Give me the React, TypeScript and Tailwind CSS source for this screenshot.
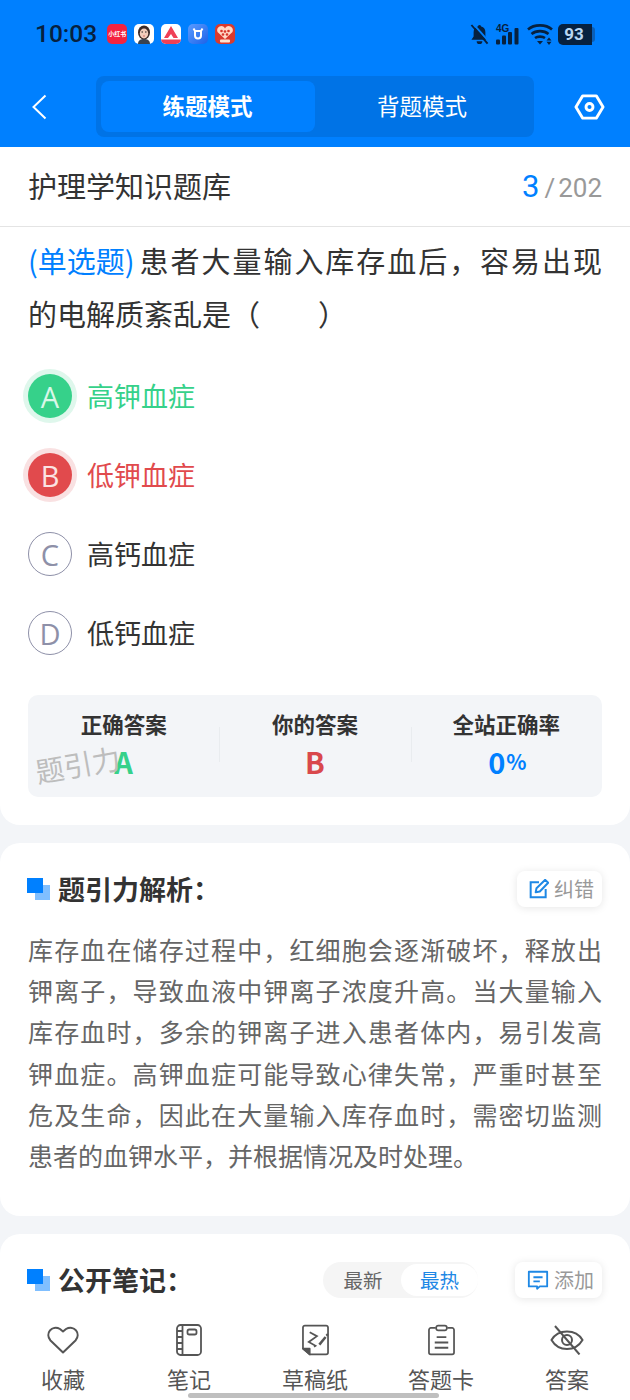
import React from "react";

const CJK = { fontFamily: '"Noto Sans CJK SC", "Noto Sans", sans-serif' };

function Square() {
  return (
    <span className="relative mr-[8px] ml-[-1px] block h-[22px] w-[23px] shrink-0">
      <span className="absolute left-[8px] top-[7px] h-[15px] w-[15px] bg-[#80bfff]" />
      <span className="absolute left-0 top-0 h-[15px] w-[16px] bg-[#0080ff]" />
    </span>
  );
}

function AppIcons() {
  return (
    <div className="flex items-center gap-[7px]">
      <div className="flex h-[20px] w-[20px] items-center justify-center overflow-hidden rounded-[5px] bg-[#f4233f] text-[6px] font-bold leading-none text-white">小红书</div>
      <div className="h-[20px] w-[20px] rounded-[5px] bg-white">
        <svg viewBox="0 0 20 20" className="h-[20px] w-[20px]">
          <ellipse cx="10" cy="8.500" rx="6" ry="7" fill="#3b2a28" />
          <ellipse cx="10" cy="9.500" rx="4.200" ry="5" fill="#f3cdbb" />
          <path d="M4 20c0-4 3-5 6-5s6 1 6 5z" fill="#39424e" />
          <path d="M7.500 8h1.500M11 8h1.500" stroke="#222" strokeWidth="1" />
          <path d="M9 12h2" stroke="#c55" strokeWidth="0.800" />
        </svg>
      </div>
      <div className="h-[20px] w-[20px] overflow-hidden rounded-[5px] bg-white">
        <svg viewBox="0 0 20 20" className="h-[20px] w-[20px]">
          <path d="M10 2 L17 14 H12.500 L10 10 L7 14 H3 Z" fill="#ef4056" />
          <rect x="0" y="15.500" width="20" height="4.500" fill="#ef4056" />
        </svg>
      </div>
      <div className="h-[20px] w-[20px] rounded-[5px] bg-gradient-to-br from-[#5a9bff] to-[#1c62e8]">
        <svg viewBox="0 0 20 20" className="h-[20px] w-[20px]" fill="none" stroke="#fff" strokeWidth="2">
          <path d="M5.500 4.500 7 7h6l1.500-2.500M7 7v4.500a3 3 0 0 0 6 0V7" />
        </svg>
      </div>
      <div className="h-[20px] w-[20px] overflow-hidden rounded-[5px] bg-[#d93a2e]">
        <svg viewBox="0 0 20 20" className="h-[20px] w-[20px]">
          <path d="M10 15 L2.500 8 A4 4 0 0 1 10 4.500 A4 4 0 0 1 17.500 8 Z" fill="#ffd9c7" />
          <circle cx="6.500" cy="7" r="1.300" fill="#d8352a" />
          <circle cx="13.500" cy="7" r="1.300" fill="#d8352a" />
          <circle cx="10" cy="7.500" r="1.300" fill="#d8352a" />
          <circle cx="8" cy="10.500" r="1.300" fill="#d8352a" />
          <circle cx="12" cy="10.500" r="1.300" fill="#d8352a" />
          <rect x="5" y="15.500" width="10" height="3" rx="1" fill="#ffe3cf" />
        </svg>
      </div>
    </div>
  );
}

function StatusRight() {
  return (
    <div className="flex items-center text-[#07213f]">
      <svg viewBox="0 0 20 22" className="mr-[6px] h-[21px] w-[19px]">
        <path fill="#07213f" d="M10 1a1.800 1.800 0 0 1 1.800 1.700c3 .8 4.400 3 4.400 6v4.300l2.300 3.500H1.500L3.800 13V8.700c0-3 1.400-5.200 4.400-6A1.800 1.800 0 0 1 10 1z" />
        <path fill="#07213f" d="M7 18h6a3 3 0 0 1-6 0z" />
        <path d="M3.500 0 20 18.500" stroke="#0080ff" strokeWidth="2" />
        <path d="M1.500 1 18.500 20.500" stroke="#07213f" strokeWidth="2" />
      </svg>
      <div className="relative mr-[7px] h-[22px] w-[25px]">
        <span className="absolute left-[1px] top-[1px] text-[10px] font-bold leading-[10px]" style={{ fontFamily: '"Liberation Sans", sans-serif' }}>4G</span>
        <svg viewBox="0 0 25 22" className="h-[22px] w-[25px]" fill="#07213f">
          <rect x="1" y="16.500" width="4" height="5" rx="1" />
          <rect x="7" y="12.500" width="4" height="9" rx="1" />
          <rect x="13" y="9" width="4" height="12.500" rx="1" />
          <rect x="19.500" y="5" width="4" height="16.500" rx="1" />
        </svg>
      </div>
      <svg viewBox="0 0 26 22" className="mr-[5px] h-[22px] w-[26px]" fill="none" stroke="#07213f" strokeWidth="2.600">
        <path d="M1 6.500C7 1 19 1 25 6.500" />
        <path d="M4.500 11c4.500-3.800 12.500-3.800 17 0" />
        <path d="M8 15c2.500-1.800 7.500-1.800 10 0" />
        <path d="M10 18h6l-3 3.500z" fill="#07213f" stroke="none" />
        <path d="M22 14.500l2.500 3h-5zM22 22l2.500-3.200h-5z" fill="#07213f" stroke="none" />
      </svg>
      <div className="h-[21px] w-[32px] rounded-l-[5px] bg-[#07213f] text-center text-[17px] font-bold leading-[21px] text-[#b9d6f2]" style={{ fontFamily: 'Roboto, sans-serif' }}>
        93
      </div>
      <div className="h-[21px] w-[2px] bg-[#07213f]" />
      <div className="h-[15px] w-[3px] rounded-r-[3px] bg-[#0a5fb8]" />
    </div>
  );
}

function Option({ letter, text, state }: { letter: string; text: string; state?: "ok" | "bad" }) {
  const circle =
    state === "ok"
      ? "bg-[#36d18a] text-[#d9f7e8] shadow-[0_0_0_5px_#dff7ec]"
      : state === "bad"
        ? "bg-[#e14a4d] text-[#fbe3e3] shadow-[0_0_0_5px_#f9e1e2]"
        : "border-[1.500px] border-[#8e90a8] text-[#8e90a8]";
  const color = state === "ok" ? "text-[#36d18a]" : state === "bad" ? "text-[#e14a4d]" : "text-[#333333]";
  return (
    <div className="flex h-[44px] items-center">
      <div className={`flex h-[44px] w-[44px] items-center justify-center rounded-full text-[29px] font-normal leading-none ${circle}`} style={{ fontFamily: '"Open Sans", sans-serif' }}>
        {letter}
      </div>
      <span className={`ml-[15px] text-[27px] leading-[44px] ${color}`}>{text}</span>
    </div>
  );
}

function Stat({ label, children, divider }: { label: string; children: React.ReactNode; divider?: boolean }) {
  return (
    <div className="relative flex flex-1 flex-col items-center pt-[15px]">
      {divider && <span className="absolute left-0 top-[32px] h-[35px] w-px bg-[#e9ecef]" />}
      <div className="text-[21.500px] font-bold leading-[28px] text-[#333333]">{label}</div>
      <div className="mt-[7px] flex h-[32px] items-center text-[29px] font-bold leading-none">{children}</div>
    </div>
  );
}

function ActionChip({ icon, text }: { icon: React.ReactNode; text: string }) {
  return (
    <div className="flex h-[36px] items-center rounded-[8px] bg-white pl-[12px] pr-[8px] shadow-[0_1px_8px_rgba(0,0,0,0.10)]">
      {icon}
      <span className="ml-[5px] pb-[1px] text-[20px] leading-none text-[#999999]">{text}</span>
    </div>
  );
}

function NavItem({ icon, text }: { icon: React.ReactNode; text: string }) {
  return (
    <div className="flex flex-col items-center">
      <div className="flex h-[40px] w-[44px] items-center justify-center">{icon}</div>
      <span className="mt-[3px] text-[22px] leading-[30px] text-[#555555]">{text}</span>
    </div>
  );
}

export default function App() {
  return (
    <div className="relative h-[1400px] w-[630px] overflow-hidden bg-[#f3f5f8]" style={CJK}>
      {/* Blue header */}
      <header className="h-[147px] bg-[#0080ff]">
        <div className="flex h-[68px] items-center justify-between pl-[35px] pr-[35px]">
          <div className="flex items-center gap-[10px]">
            <span className="text-[24.500px] font-medium leading-none text-[#07213f]" style={{ fontFamily: 'Roboto, sans-serif' }}>10:03</span>
            <AppIcons />
          </div>
          <StatusRight />
        </div>
        <div className="flex items-center pl-[31px] pr-[25px] pt-[8px]">
          <svg viewBox="0 0 16 26" className="h-[26px] w-[16px]" fill="none" stroke="#fff" strokeWidth="2">
            <path d="M14.500 1.500 2.500 13l12 11.500" />
          </svg>
          <div className="ml-[49px] flex h-[61px] w-[438px] rounded-[8px] bg-[#0073e6] p-[5px]">
            <div className="flex h-full w-[214px] items-center justify-center rounded-[8px] bg-[#0080ff] pb-[2px] pr-[1px] text-[22.500px] font-bold text-white">练题模式</div>
            <div className="flex h-full flex-1 items-center justify-center pb-[2px] text-[22.500px] text-white">背题模式</div>
          </div>
          <svg viewBox="0 0 32 26" className="ml-auto h-[26px] w-[31px]" fill="none" stroke="#fff" strokeWidth="3">
            <path d="M9 1.500h14L30 13l-7 11.500H9L2 13z" strokeLinejoin="round" />
            <circle cx="16" cy="13" r="3.600" />
          </svg>
        </div>
      </header>

      {/* Question card */}
      <section className="rounded-b-[20px] bg-white pb-[28px]">
        <div className="flex h-[80px] items-center justify-between border-b border-[#e4e4e4] px-[28px]">
          <div className="pb-[2px] text-[29px] leading-none text-[#333333]">护理学知识题库</div>
          <div className="flex items-baseline" style={{ fontFamily: 'Roboto, sans-serif' }}>
            <span className="ml-[1px] text-[31px] leading-none text-[#0080ff]">3</span>
            <span className="ml-[5px] text-[26px] leading-none text-[#999999]">/</span>
            <span className="ml-[3px] text-[26px] leading-none text-[#999999]">202</span>
          </div>
        </div>
        <div className="px-[28px] pt-[7px] text-[29px] leading-[53px] text-[#333333]">
          <div className="flex">
            <span className="shrink-0 text-[#0080ff]">(单选题)</span>
            <span className="ml-[5px] flex-1 text-justify [text-align-last:justify]">患者大量输入库存血后，容易出现</span>
          </div>
          <div>的电解质紊乱是（　　）</div>
        </div>
        <div className="mt-[34px] flex flex-col gap-[35px] px-[28px]">
          <Option letter="A" text="高钾血症" state="ok" />
          <Option letter="B" text="低钾血症" state="bad" />
          <Option letter="C" text="高钙血症" />
          <Option letter="D" text="低钙血症" />
        </div>
        <div className="relative mx-[28px] mt-[40px] flex h-[102px] rounded-[10px] bg-[#f3f5f8]">
          <Stat label="正确答案"><span className="text-[#36d18a]">A</span></Stat>
          <Stat label="你的答案" divider><span className="text-[#d9484c]">B</span></Stat>
          <Stat label="全站正确率" divider>
            <span className="ml-[2px] text-[#0080ff]">0</span>
            <span className="ml-[1px] text-[21px] text-[#0080ff]">%</span>
          </Stat>
          <span className="absolute left-[7px] top-[55px] w-[86px] -rotate-[10deg] text-[28.500px] leading-none text-[#bdbdbd]">题引力</span>
        </div>
      </section>

      {/* Analysis card */}
      <section className="mt-[18px] h-[373px] rounded-[20px] bg-white px-[28px] pt-[27px]">
        <div className="flex h-[38px] items-center justify-between">
          <div className="flex items-center">
            <Square />
            <span className="pb-[2px] text-[27px] font-bold leading-none text-[#333333]">题引力解析：</span>
          </div>
          <ActionChip
            text="纠错"
            icon={
              <svg viewBox="0 0 24 24" className="h-[20px] w-[20px]" fill="none" stroke="#1e88e5" strokeWidth="2.400">
                <path d="M12 4H2v18h18V12" />
                <path d="M8 16l1-5L19.500 1 23 4.500 13 15z" strokeLinejoin="round" />
              </svg>
            }
          />
        </div>
        <p className="mt-[21px] text-justify text-[25px] leading-[41.200px] text-[#666666]">
          库存血在储存过程中，红细胞会逐渐破坏，释放出钾离子，导致血液中钾离子浓度升高。当大量输入库存血时，多余的钾离子进入患者体内，易引发高钾血症。高钾血症可能导致心律失常，严重时甚至危及生命，因此在大量输入库存血时，需密切监测患者的血钾水平，并根据情况及时处理。
        </p>
      </section>

      {/* Notes card */}
      <section className="mt-[18px] h-[200px] rounded-t-[20px] bg-white px-[28px] pt-[27px]">
        <div className="flex h-[38px] items-center">
          <Square />
          <span className="pb-[2px] text-[27px] font-bold leading-none text-[#333333]">公开笔记：</span>
          <div className="ml-auto flex h-[36px] w-[155px] items-center rounded-full bg-[#f5f5f5] py-[2px] text-[19.500px]">
            <span className="flex-1 pb-[1px] pl-[2px] text-center text-[#666666]">最新</span>
            <span className="flex h-[32px] w-[77px] items-center justify-center rounded-full bg-white pb-[1px] text-[#1e88e5]">最热</span>
          </div>
          <div className="ml-[37px]">
            <ActionChip
              text="添加"
              icon={
                <svg viewBox="0 0 24 24" className="h-[22px] w-[22px]" fill="none" stroke="#1e88e5" strokeWidth="2">
                  <path d="M2 3h20v16h-8l-3 2.500V19H2z" strokeLinejoin="round" />
                  <path d="M7 9h10M7 13.500h7" />
                </svg>
              }
            />
          </div>
        </div>
      </section>

      {/* Bottom bar */}
      <nav className="absolute bottom-0 left-0 grid h-[82px] w-[630px] grid-cols-5 bg-white pt-[2px]">
        <NavItem
          text="收藏"
          icon={
            <svg viewBox="0 0 32 28" className="h-[28px] w-[32px]" fill="none" stroke="#555" strokeWidth="2">
              <path d="M16 26.500 3.500 14.500C-2.500 7.500 5 -1.500 13 3L16 5.500 19 3C27 -1.500 34.500 7.500 28.500 14.500z" strokeLinejoin="round" />
            </svg>
          }
        />
        <NavItem
          text="笔记"
          icon={
            <svg viewBox="0 0 26 32" className="h-[32px] w-[26px]" fill="none" stroke="#555" strokeWidth="1.800">
              <rect x="1" y="1" width="24" height="30" rx="3.500" />
              <path d="M6.500 1v30M1 7h5.500M1 13h5.500M1 19h5.500M1 25h5.500" />
              <rect x="11.500" y="5.500" width="9" height="5" rx="1.800" />
            </svg>
          }
        />
        <NavItem
          text="草稿纸"
          icon={
            <svg viewBox="0 0 28 32" className="h-[32px] w-[27px]" fill="none" stroke="#555" strokeWidth="1.800">
              <path d="M8 31h17a2 2 0 0 0 2-2V3a2 2 0 0 0-2-2H3a2 2 0 0 0-2 2v22z" strokeLinejoin="round" />
              <path d="M1 25h7v6z" fill="#555" strokeLinejoin="round" />
              <path d="M8 8l7.500 4-8.500 6 7 4-1.500 1" />
              <path d="M17 20l6.500-8 2 1.600-6.500 8z" fill="#555" stroke="none" />
              <path d="M24.500 10.500l1.500-1.500 1.500 1.500-1.500 2z" fill="#555" stroke="none" />
            </svg>
          }
        />
        <NavItem
          text="答题卡"
          icon={
            <svg viewBox="0 0 28 32" className="h-[32px] w-[27px]" fill="none" stroke="#555" strokeWidth="1.800">
              <path d="M8 3.500H3a2 2 0 0 0-2 2V29a2 2 0 0 0 2 2h22a2 2 0 0 0 2-2V5.500a2 2 0 0 0-2-2h-5" />
              <rect x="8.500" y="1" width="11" height="5" rx="2" />
              <path d="M9 13h10M7 18.500h14M7 24h14" strokeWidth="2" />
            </svg>
          }
        />
        <NavItem
          text="答案"
          icon={
            <svg viewBox="0 0 34 30" className="h-[30px] w-[34px]" fill="none" stroke="#555" strokeWidth="2">
              <path d="M1.500 15C5 9 10.500 6.500 17 6.500S29 9 32.500 15C29 21 23.500 24 17 24S5 21 1.500 15z" />
              <circle cx="17" cy="15" r="5" />
              <path d="M5 1 29.500 29.500" />
            </svg>
          }
        />
        <span className="absolute bottom-[2px] left-[188px] h-[5px] w-[251px] rounded-full bg-[#bfbfbf]" />
      </nav>
    </div>
  );
}
